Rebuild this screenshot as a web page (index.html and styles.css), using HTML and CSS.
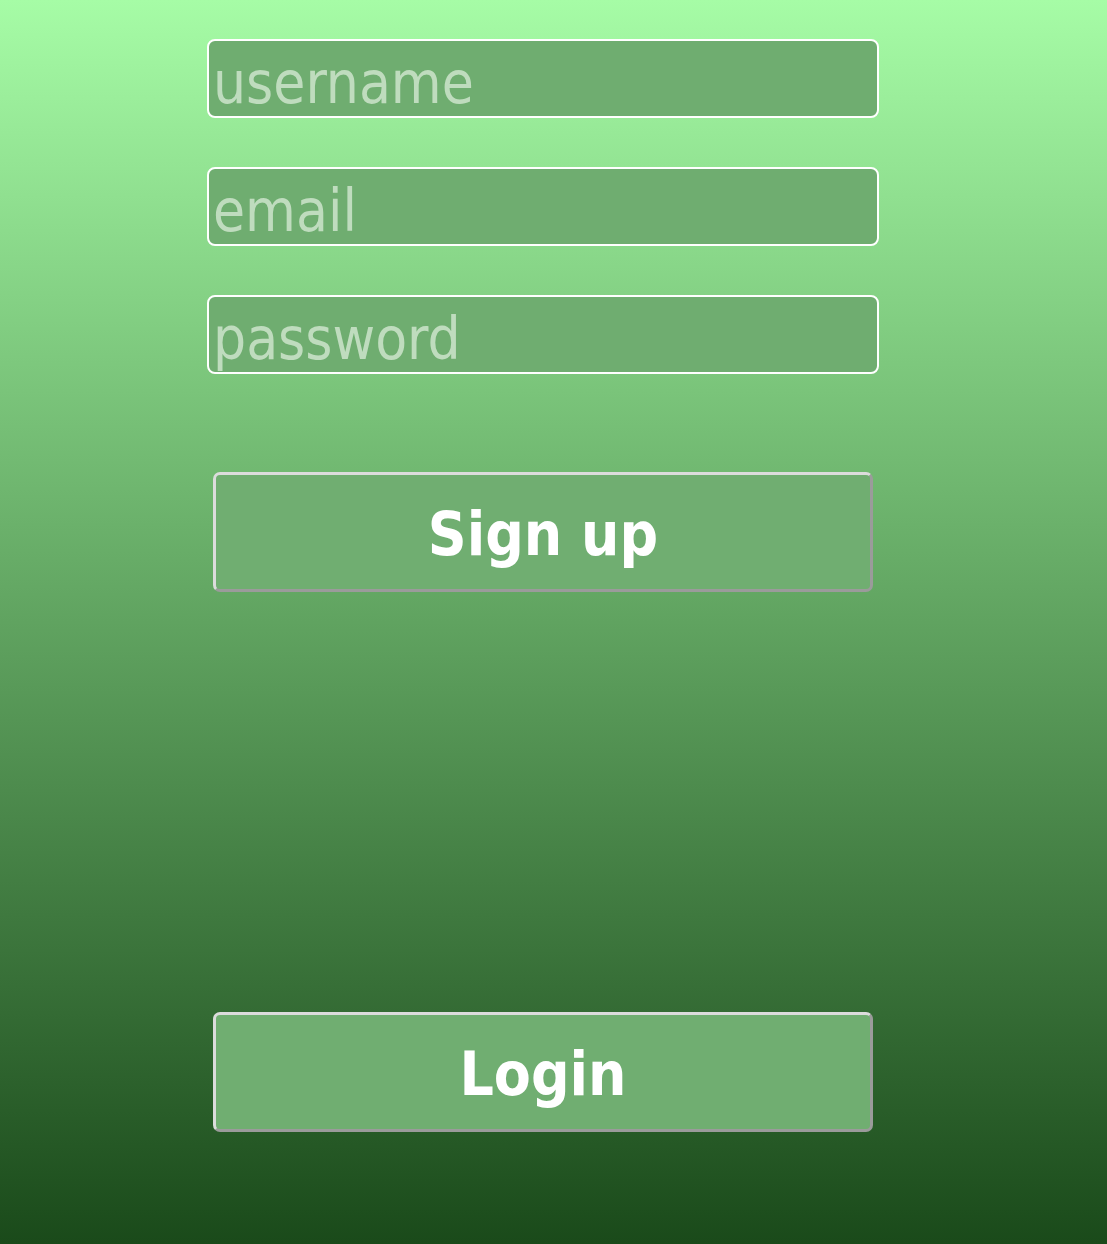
FILE: index.html
```html
<!DOCTYPE html>
<html>
<head>
<meta charset="utf-8">
<link rel="stylesheet" href="styles.css">
</head>
<body>
<main class="page">
  <form class="signup">
    <input class="field" type="text" placeholder="username">
    <input class="field" type="email" placeholder="email">
    <input class="field" type="password" placeholder="password">
    <button class="btn btn-signup" type="button">Sign up</button>
  </form>
  <button class="btn btn-login" type="button">Login</button>
</main>
</body>
</html>
```
FILE: styles.css
```css
html, body {
  margin: 0;
  padding: 0;
}
body {
  min-height: 1244px;
  background: linear-gradient(to bottom, #a6fca6 0%, #1a4a1a 100%);
  font-family: "DejaVu Sans Condensed", "DejaVu Sans", sans-serif;
}
.page {
  width: 1086px;
  padding-top: 39px;
  display: flex;
  flex-direction: column;
  align-items: center;
}
.signup {
  display: flex;
  flex-direction: column;
  align-items: center;
  gap: 49px;
  margin: 0;
}
.field {
  box-sizing: border-box;
  width: 672px;
  height: 79px;
  margin: 0;
  padding: 8px 4px 0;
  border: 2px solid #ffffff;
  border-radius: 8px;
  background: #6fad70;
  color: #ffffff;
  font-family: "DejaVu Sans Condensed", "DejaVu Sans", sans-serif;
  font-size: 58px;
  outline: none;
}
.field::placeholder {
  color: #bfdcbe;
  opacity: 1;
}
.btn {
  box-sizing: border-box;
  width: 660px;
  height: 120px;
  margin: 0;
  padding: 4px 0 0;
  border: 3px solid;
  border-color: #dcdcdc #9b9b9b #9b9b9b #dcdcdc;
  border-radius: 7px;
  background: #70ae71;
  color: #ffffff;
  font-family: "DejaVu Sans Condensed", "DejaVu Sans", sans-serif;
  font-weight: bold;
  font-size: 60px;
  cursor: pointer;
}
.btn-signup {
  margin-top: 49px;
}
.btn-login {
  margin-top: 420px;
}
```
